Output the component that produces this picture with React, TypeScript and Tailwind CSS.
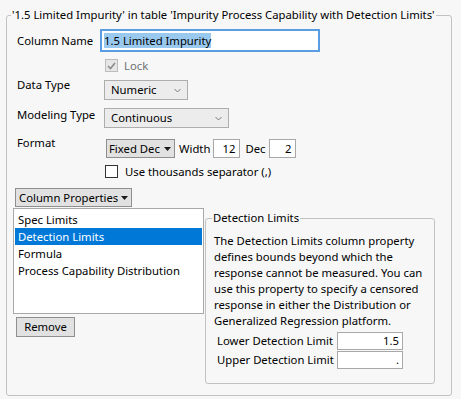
import React from "react";

function Chevron() {
  return (
    <svg width="7" height="5" viewBox="0 0 7 5" className="shrink-0">
      <path d="M0.5 1 L3.5 4 L6.5 1" fill="none" stroke="#7a7a7a" strokeWidth="1" />
    </svg>
  );
}

function Triangle() {
  return (
    <svg width="7" height="4" viewBox="0 0 7 4" className="shrink-0">
      <path d="M0 0 H7 L3.5 4 Z" fill="#1a1a1a" />
    </svg>
  );
}

function Select({ label, width }: { label: string; width: string }) {
  return (
    <div
      className={`${width} h-[20px] flex items-center justify-between pl-[6px] pr-[6px] border border-[#adadad] bg-[#ececec]`}
    >
      <span>{label}</span>
      <Chevron />
    </div>
  );
}

function NumBox({ value, width }: { value: string; width: string }) {
  return (
    <div
      className={`${width} h-[19px] border border-[#a8a8a8] bg-white flex items-center justify-end pr-[4px] leading-none`}
    >
      {value}
    </div>
  );
}

export default function App() {
  return (
    <div className="w-[461px] h-[399px] overflow-hidden whitespace-nowrap bg-[#f7f7f7] pt-[7px] pl-[6px] text-[11.3px] leading-[16px] text-black font-['Noto_Sans',sans-serif]">
      <fieldset className="w-[446px] h-[389px] border border-[#c2c2c2] rounded-[3px] p-0 m-0">
        <legend className="ml-[4px] px-[1px] leading-[16px]">
          '1.5 Limited Impurity' in table 'Impurity Process Capability with Detection Limits'
        </legend>

        <div className="pl-[8px] flex flex-col">
          {/* Column name */}
          <div className="flex items-center mt-[6px]">
            <span className="w-[85px] pl-[2px]">Column Name</span>
            <div className="w-[220px] h-[23px] border-2 border-[#5a9de3] bg-white flex items-center pl-[2px]">
              <span className="bg-[#99c9ef] leading-[15px]">1.5 Limited Impurity</span>
            </div>
          </div>

          {/* Lock */}
          <div className="flex items-center mt-[7px] h-[13px] pl-[90px]">
            <div className="w-[13px] h-[13px] border border-[#bcbcbc] bg-[#e6e6e6] flex items-center justify-center">
              <svg width="9" height="8" viewBox="0 0 9 8">
                <path d="M1 4 L3.5 6.5 L8 1" fill="none" stroke="#8a8a8a" strokeWidth="1.6" />
              </svg>
            </div>
            <span className="ml-[6px] text-[#707070]">Lock</span>
          </div>

          {/* Data type */}
          <div className="flex items-start mt-[5px]">
            <span className="w-[89px] pl-[2px]">Data Type</span>
            <div className="mt-[3px]">
              <Select label="Numeric" width="w-[84px]" />
            </div>
          </div>

          {/* Modeling type */}
          <div className="flex items-start mt-[7px]">
            <span className="w-[89px] pl-[2px]">Modeling Type</span>
            <div className="mt-[1px]">
              <Select label="Continuous" width="w-[125px]" />
            </div>
          </div>

          {/* Format */}
          <div className="flex items-start mt-[7px]">
            <span className="w-[91px] pl-[2px]">Format</span>
            <div className="mt-[4px] flex items-center">
              <div className="w-[69px] h-[19px] flex items-center justify-between pl-[2px] pr-[3px] border border-[#8f8f8f] bg-[#e1e1e1]">
                <span>Fixed Dec</span>
                <Triangle />
              </div>
              <span className="ml-[4px]">Width</span>
              <div className="ml-[3px]">
                <NumBox value="12" width="w-[27px]" />
              </div>
              <span className="ml-[5px]">Dec</span>
              <div className="ml-[4px]">
                <NumBox value="2" width="w-[27px]" />
              </div>
            </div>
          </div>

          {/* Thousands */}
          <div className="flex items-center mt-[7px] h-[13px] pl-[90px]">
            <div className="w-[13px] h-[13px] border border-[#333] bg-white" />
            <span className="ml-[7px]">Use thousands separator (,)</span>
          </div>

          {/* Column properties */}
          <div className="flex mt-[10px]">
            <div className="w-[117px] h-[19px] flex items-center justify-between pl-[3px] pr-[3px] border border-[#8f8f8f] bg-[#e1e1e1]">
              <span>Column Properties</span>
              <Triangle />
            </div>
          </div>

          <div className="flex items-start mt-[1px]">
            <div className="flex flex-col -ml-[2px]">
              <div className="w-[191px] h-[106px] border border-[#a8a8a8] bg-white px-[1px] pt-[2px]">
                <div className="h-[17px] pl-[3px] flex items-center">Spec Limits</div>
                <div className="h-[17px] pl-[3px] flex items-center bg-[#0078d7] text-white">Detection Limits</div>
                <div className="h-[17px] pl-[3px] flex items-center">Formula</div>
                <div className="h-[17px] pl-[3px] flex items-center">Process Capability Distribution</div>
              </div>
              <div className="mt-[3px] ml-[3px] w-[59px] h-[20px] border border-[#8f8f8f] bg-[#e1e1e1] flex items-center justify-center">
                Remove
              </div>
            </div>

            <fieldset className="ml-[1px] mt-[2px] w-[230px] h-[174px] border border-[#c2c2c2] rounded-[3px] p-0 m-0">
              <legend className="ml-[6px] px-[1px] leading-[16px]">Detection Limits</legend>
              <p className="mt-[7px] pl-[8px]">
                The Detection Limits column property
                <br />
                defines bounds beyond which the
                <br />
                response cannot be measured. You can
                <br />
                use this property to specify a censored
                <br />
                response in either the Distribution or
                <br />
                Generalized Regression platform.
              </p>
              <div className="mt-[3px] pl-[11px] flex flex-col gap-[1px]">
                <div className="flex items-center">
                  <span className="w-[120px]">Lower Detection Limit</span>
                  <div className="w-[66px] h-[18px] border border-[#a8a8a8] bg-white flex items-center justify-end pr-[3px]">1.5</div>
                </div>
                <div className="flex items-center">
                  <span className="w-[120px]">Upper Detection Limit</span>
                  <div className="w-[66px] h-[18px] border border-[#a8a8a8] bg-white flex items-center justify-end pr-[3px]">.</div>
                </div>
              </div>
            </fieldset>
          </div>
        </div>
      </fieldset>
    </div>
  );
}
